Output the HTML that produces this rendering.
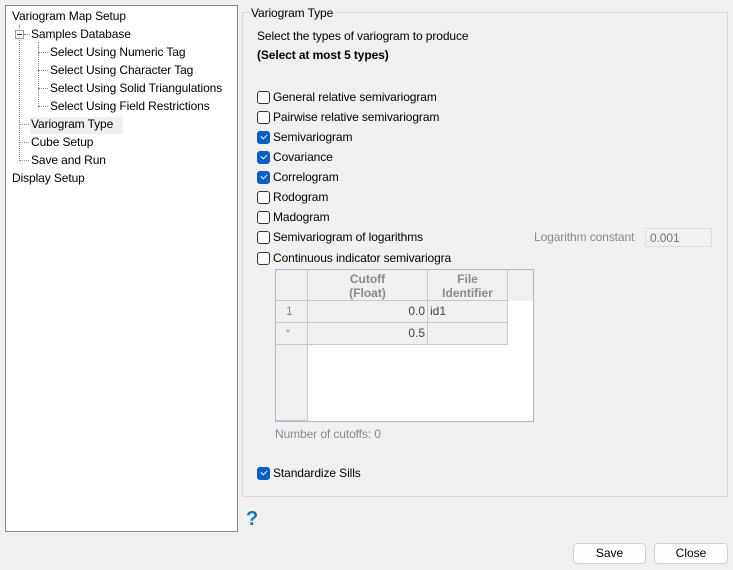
<!DOCTYPE html>
<html><head><style>
*{margin:0;padding:0;box-sizing:border-box}
body{width:733px;height:570px;background:#f0f0f0;font-family:"Liberation Sans",sans-serif;font-size:12px;color:#000;position:relative;overflow:hidden}
.a{position:absolute;white-space:nowrap;line-height:14px;letter-spacing:-0.1px}
.tree{position:absolute;left:5px;top:5px;width:233px;height:527px;background:#fff;border:1px solid #828790}
.vd{position:absolute;border-left:1px dotted #888;width:0}
.hd{position:absolute;border-top:1px dotted #888;height:0}
.cb{position:absolute;width:13px;height:13px;border:1px solid #333;border-radius:3px;background:#fff}
.cb.on{background:#0a5fc2;border-color:#0a5fc2}
.cb.on::after{content:"";position:absolute;left:3px;top:2px;width:5px;height:3px;border-left:1px solid #fff;border-bottom:1px solid #fff;transform:rotate(-45deg)}
.btn{position:absolute;height:21px;background:#fdfdfd;border:1px solid #d0d0d0;border-radius:4px;text-align:center;line-height:19px}
.g{color:#8a8a8a}
.c{position:absolute;background:#f0f0f0;border-right:1px solid #c8c8c8;border-bottom:1px solid #c8c8c8;line-height:14px}
</style></head><body>
<div class="tree">
 <div class="vd" style="left:13px;top:19px;height:136px"></div>
 <div class="vd" style="left:32px;top:36px;height:64px"></div>
 <div class="hd" style="left:18px;top:28px;width:6px"></div>
 <div class="hd" style="left:32px;top:46px;width:10px"></div>
 <div class="hd" style="left:32px;top:64px;width:10px"></div>
 <div class="hd" style="left:32px;top:82px;width:10px"></div>
 <div class="hd" style="left:32px;top:100px;width:10px"></div>
 <div class="hd" style="left:13px;top:118px;width:10px"></div>
 <div class="hd" style="left:13px;top:136px;width:10px"></div>
 <div class="hd" style="left:13px;top:154px;width:10px"></div>
 <div style="position:absolute;left:9px;top:24px;width:9px;height:9px;border:1px solid #999;background:#fff"><div style="position:absolute;left:1px;top:3px;width:5px;border-top:1px solid #333"></div></div>
 <div style="position:absolute;left:24px;top:111px;width:93px;height:17px;background:#efefef"></div>
</div>
<div class="a" style="left:12px;top:9px">Variogram Map Setup</div>
<div class="a" style="left:31px;top:27px">Samples Database</div>
<div class="a" style="left:50px;top:45px">Select Using Numeric Tag</div>
<div class="a" style="left:50px;top:63px">Select Using Character Tag</div>
<div class="a" style="left:50px;top:81px">Select Using Solid Triangulations</div>
<div class="a" style="left:50px;top:99px">Select Using Field Restrictions</div>
<div class="a" style="left:31px;top:117px">Variogram Type</div>
<div class="a" style="left:31px;top:135px">Cube Setup</div>
<div class="a" style="left:31px;top:153px">Save and Run</div>
<div class="a" style="left:12px;top:171px">Display Setup</div>

<div style="position:absolute;left:242px;top:12px;width:486px;height:485px;border:1px solid #d8d8d8"></div>
<div class="a" style="left:249px;top:6px;background:#f0f0f0;padding:0 2px">Variogram Type</div>
<div class="a" style="left:257px;top:29px">Select the types of variogram to produce</div>
<div class="a" style="left:257px;top:48px;font-weight:bold">(Select at most 5 types)</div>

<div class="cb" style="left:257px;top:91px"></div><div class="a" style="left:273px;top:90px">General relative semivariogram</div>
<div class="cb" style="left:257px;top:111px"></div><div class="a" style="left:273px;top:110px">Pairwise relative semivariogram</div>
<div class="cb on" style="left:257px;top:131px"></div><div class="a" style="left:273px;top:130px">Semivariogram</div>
<div class="cb on" style="left:257px;top:151px"></div><div class="a" style="left:273px;top:150px">Covariance</div>
<div class="cb on" style="left:257px;top:171px"></div><div class="a" style="left:273px;top:170px">Correlogram</div>
<div class="cb" style="left:257px;top:191px"></div><div class="a" style="left:273px;top:190px">Rodogram</div>
<div class="cb" style="left:257px;top:211px"></div><div class="a" style="left:273px;top:210px">Madogram</div>
<div class="cb" style="left:257px;top:231px"></div><div class="a" style="left:273px;top:230px">Semivariogram of logarithms</div>
<div class="a g" style="left:534px;top:230px">Logarithm constant</div>
<div style="position:absolute;left:645px;top:228px;width:67px;height:19px;border:1px solid #dcdcdc;background:#f0f0f0"></div>
<div class="a g" style="left:650px;top:231px;color:#777">0.001</div>
<div class="cb" style="left:257px;top:252px"></div><div class="a" style="left:273px;top:251px">Continuous indicator semivariogra</div>

<div style="position:absolute;left:275px;top:269px;width:259px;height:153px;border:1px solid #a3bcd6;background:#fff">
 <div class="c" style="left:0;top:0;width:32px;height:151px"></div>
 <div class="c" style="left:0;top:0;width:257px;height:31px;border:none"></div>
 <div class="c" style="left:0;top:0;width:32px;height:31px"></div>
 <div class="c g" style="left:32px;top:0;width:120px;height:31px;text-align:center;font-weight:bold;padding-top:2px">Cutoff<br>(Float)</div>
 <div class="c g" style="left:152px;top:0;width:80px;height:31px;text-align:center;font-weight:bold;padding-top:2px">File<br>Identifier</div>
 <div class="c g" style="left:0;top:31px;width:32px;height:22px;padding:3px 0 0 10px">1</div>
 <div class="c" style="left:32px;top:31px;width:120px;height:22px;text-align:right;padding:3px 2px 0 0;color:#444">0.0</div>
 <div class="c" style="left:152px;top:31px;width:80px;height:22px;padding:3px 0 0 2px;color:#444">id1</div>
 <div class="c g" style="left:0;top:53px;width:32px;height:22px;padding:4px 0 0 10px;font-size:10px">*</div>
 <div class="c" style="left:32px;top:53px;width:120px;height:22px;text-align:right;padding:3px 2px 0 0;color:#444">0.5</div>
 <div class="c" style="left:152px;top:53px;width:80px;height:22px"></div>
</div>
<div class="a g" style="left:275px;top:427px">Number of cutoffs: 0</div>
<div class="cb on" style="left:257px;top:467px"></div><div class="a" style="left:273px;top:466px">Standardize Sills</div>

<div class="a" style="left:246px;top:508px;font-size:20px;font-weight:bold;color:#1b75b5;line-height:22px">?</div>
<div class="btn" style="left:573px;top:543px;width:73px">Save</div>
<div class="btn" style="left:654px;top:543px;width:74px">Close</div>
</body></html>
